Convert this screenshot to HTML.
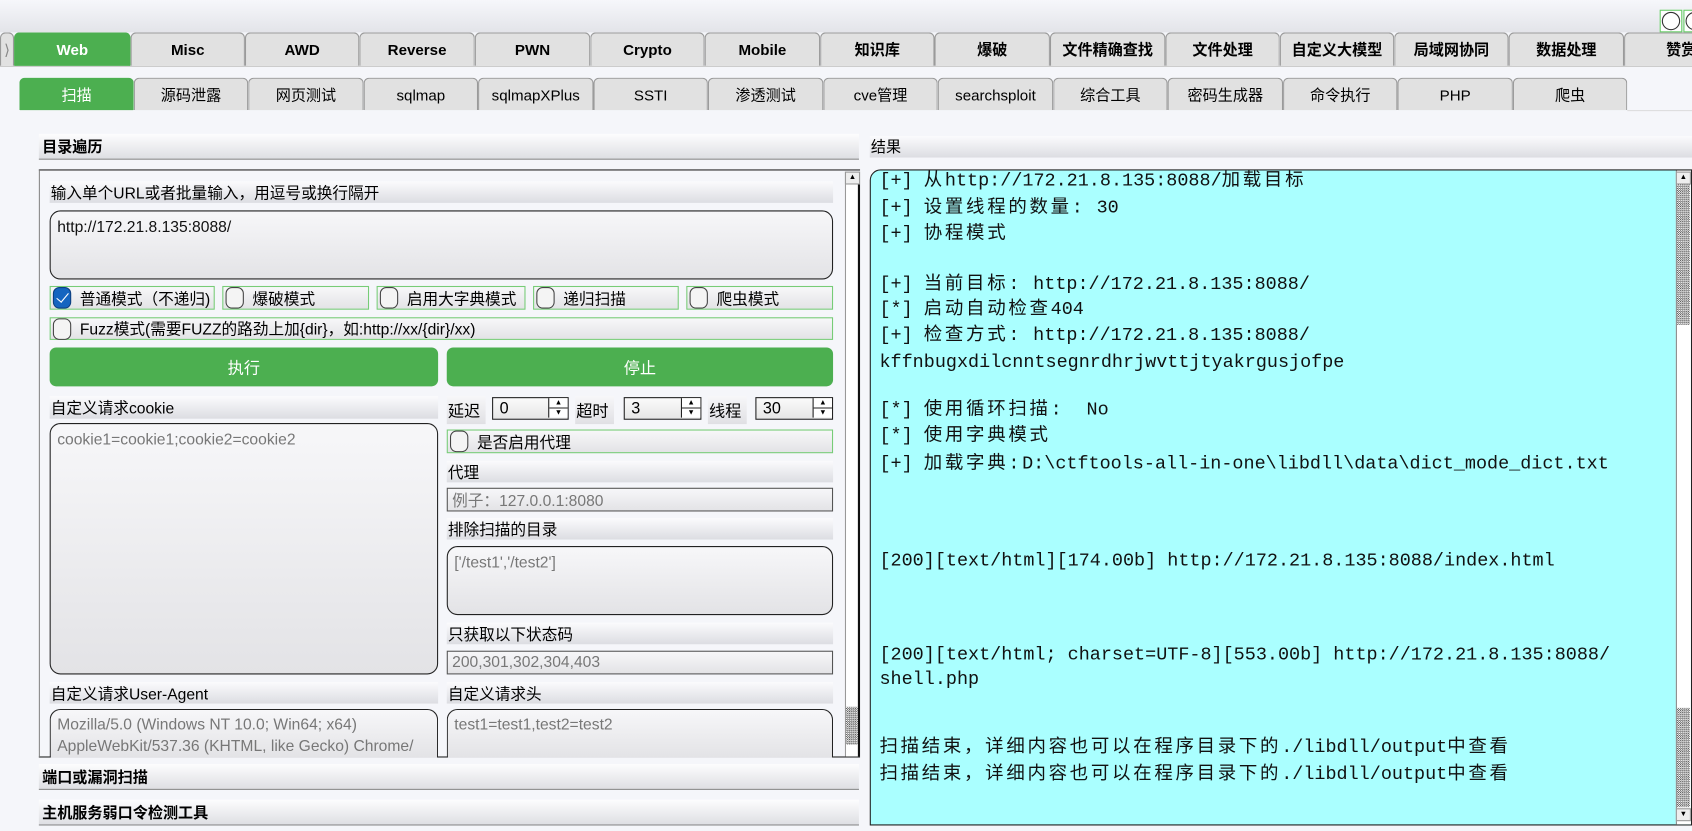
<!DOCTYPE html>
<html><head><meta charset="utf-8">
<style>
*{box-sizing:border-box;margin:0;padding:0}
html,body{width:1692px;height:830px;overflow:hidden;background:#f5f6fa}
#root{position:absolute;left:0;top:0;width:1568px;height:770px;transform:scale(1.0791);transform-origin:0 0;font-family:"Liberation Sans","Noto Sans CJK SC",sans-serif;color:#000}
.a{position:absolute}
.top{left:0;top:0;width:1568px;height:30px;background:linear-gradient(#f6f7fb,#e3e4e9)}
.t1{position:absolute;top:30px;height:31px;border:1px solid #9a9a9a;border-bottom:none;border-radius:5px 5px 0 0;background:#e1e1e1;font-weight:bold;font-size:14px;display:flex;align-items:center;justify-content:center}
.t2{position:absolute;top:72px;height:30px;border:1px solid #9a9a9a;border-bottom:none;border-radius:5px 5px 0 0;background:#e1e1e1;font-size:14px;display:flex;align-items:center;justify-content:center}
.g{background:#4caf50!important;color:#fff;border-color:#4caf50!important}
.bar{position:absolute;background:linear-gradient(#fbfbfd,#dcdde2);font-size:14.5px;display:flex;align-items:center;padding-left:1px;white-space:nowrap}
.hbar{position:absolute;background:linear-gradient(#fdfdfe,#dedfe3);font-size:14px;font-weight:bold;display:flex;align-items:center;padding-left:3px;border-bottom:1px solid #888}
.ta{position:absolute;border:1.5px solid #222;border-radius:10px;background:linear-gradient(#f7f7f9,#e3e3e6);font-size:14.5px;padding:4px 6px;color:#777;line-height:22px}
.inp{position:absolute;border:1.5px solid #555;background:linear-gradient(#f7f7f9,#e3e3e6);font-size:14.5px;color:#777;padding-left:4px;display:flex;align-items:center}
.cb{position:absolute;border:1px solid #7c7;background:linear-gradient(#f7f7f9,#e3e3e6);font-size:14.5px;display:flex;align-items:center;padding-left:2px;white-space:nowrap}
.cb i{display:inline-block;width:17px;height:20px;border:1.3px solid #444;border-radius:6px;margin-right:8px;background:#f4f4f4;flex:none}
.cb i.on{background:#1565c0;border-color:#0d3f80;position:relative}
.cb i.on:after{content:"";position:absolute;left:5px;top:2px;width:5px;height:10px;border:solid #fff;border-width:0 1.5px 1.5px 0;transform:rotate(40deg)}
.btn{position:absolute;background:#4caf50;border-radius:6px;color:#fff;font-size:15px;display:flex;align-items:center;justify-content:center}
.spin{position:absolute;height:21px;border:1.5px solid #222;background:linear-gradient(#fafafa,#e6e6e6);font-size:15px;padding-left:6px;display:flex;align-items:center}
.spin b{position:absolute;right:0;top:0;width:18px;height:18px;border-left:1px solid #222;background:linear-gradient(#fff 0,#fff 48%,#222 48%,#222 54%,#fff 54%);font-size:7px;text-align:center;line-height:9px;font-weight:normal}
.lbl{position:absolute;height:26px;background:linear-gradient(#f7f7f9,#e0e0e4);font-size:15px;display:flex;align-items:center;padding-left:1px}
.out{left:806px;top:157px;width:762px;height:608px;background:#aaffff;border:1.5px solid #222;border-radius:10px 0 0 0;overflow:hidden}
.ln{position:absolute;left:8px;font-family:"Liberation Mono","Noto Sans CJK SC",monospace;font-size:17.1px;white-space:pre;color:#111;line-height:22px}
.ln span{letter-spacing:2.5px}
.chk{background-image:repeating-conic-gradient(#555 0 25%,#fff 0 50%);background-size:2px 2px}
</style></head><body><div id="root">
<div class="a top"></div>
<div class="a" style="left:1538px;top:9px;width:21px;height:21px;border:1px solid #6c6;background:#fff"><div style="margin:1px;width:17px;height:17px;border:1px solid #333;border-radius:50%"></div></div>
<div class="a" style="left:1560px;top:9px;width:10px;height:21px;border:1px solid #6c6;background:#fff"><div style="margin:1px;width:17px;height:17px;border:1px solid #333;border-radius:50%"></div></div>
<div class="a" style="left:0;top:61px;width:1568px;height:1px;background:#c8c8c8"></div>
<div class="t1" style="left:0;width:13px;font-weight:normal;color:#888">⟩</div>
<div class="t1 g" style="left:13px;width:108px">Web</div>
<div class="t1" style="left:121px;width:106px">Misc</div>
<div class="t1" style="left:227px;width:106px">AWD</div>
<div class="t1" style="left:333px;width:107px">Reverse</div>
<div class="t1" style="left:440px;width:107px">PWN</div>
<div class="t1" style="left:547px;width:106px">Crypto</div>
<div class="t1" style="left:653px;width:107px">Mobile</div>
<div class="t1" style="left:760px;width:106px">知识库</div>
<div class="t1" style="left:866px;width:107px">爆破</div>
<div class="t1" style="left:973px;width:107px">文件精确查找</div>
<div class="t1" style="left:1080px;width:106px">文件处理</div>
<div class="t1" style="left:1186px;width:106px">自定义大模型</div>
<div class="t1" style="left:1292px;width:106px">局域网协同</div>
<div class="t1" style="left:1398px;width:107px">数据处理</div>
<div class="t1" style="left:1505px;width:106px">赞赏</div>

<div class="t2 g" style="left:18px;width:106px">扫描</div>
<div class="t2" style="left:124px;width:106px">源码泄露</div>
<div class="t2" style="left:230px;width:107px">网页测试</div>
<div class="t2" style="left:337px;width:106px">sqlmap</div>
<div class="t2" style="left:443px;width:107px">sqlmapXPlus</div>
<div class="t2" style="left:550px;width:106px">SSTI</div>
<div class="t2" style="left:656px;width:107px">渗透测试</div>
<div class="t2" style="left:763px;width:106px">cve管理</div>
<div class="t2" style="left:869px;width:107px">searchsploit</div>
<div class="t2" style="left:976px;width:106px">综合工具</div>
<div class="t2" style="left:1082px;width:107px">密码生成器</div>
<div class="t2" style="left:1189px;width:106px">命令执行</div>
<div class="t2" style="left:1295px;width:107px">PHP</div>
<div class="t2" style="left:1402px;width:106px">爬虫</div>
<div class="a" style="left:1508px;top:102px;width:60px;height:1px;background:#ddd"></div>

<div class="hbar" style="left:36px;top:124px;width:760px;height:24px">目录遍历</div>
<div class="a" style="left:36px;top:157px;width:761px;height:545px;border-top:1.5px solid #222;border-left:1px solid #888;border-bottom:1.5px solid #222"></div>
<div class="a" style="left:783px;top:159px;width:14px;height:542px;background:#fff;border-right:2px solid #111;border-left:1px solid #999"></div>
<div class="a" style="left:783px;top:159px;width:14px;height:12px;background:#eee;border:1px solid #999;font-size:7px;text-align:center;line-height:9px">▲</div>
<div class="a chk" style="left:784px;top:655px;width:11px;height:35px"></div>

<div class="bar" style="left:46px;top:168px;width:726px;height:20px">输入单个URL或者批量输入，用逗号或换行隔开</div>
<div class="ta" style="left:46px;top:195px;width:726px;height:64px;color:#111">http://172.21.8.135:8088/</div>
<div class="cb" style="left:46px;top:265px;width:153px;height:22px"><i class="on"></i>普通模式（不递归)</div>
<div class="cb" style="left:206px;top:265px;width:136px;height:22px"><i></i>爆破模式</div>
<div class="cb" style="left:349px;top:265px;width:138px;height:22px"><i></i>启用大字典模式</div>
<div class="cb" style="left:494px;top:265px;width:135px;height:22px"><i></i>递归扫描</div>
<div class="cb" style="left:636px;top:265px;width:136px;height:22px"><i></i>爬虫模式</div>
<div class="cb" style="left:46px;top:294px;width:726px;height:21px"><i></i>Fuzz模式(需要FUZZ的路劲上加{dir}，如:http://xx/{dir}/xx)</div>
<div class="btn" style="left:46px;top:322px;width:360px;height:36px">执行</div>
<div class="btn" style="left:414px;top:322px;width:358px;height:36px">停止</div>

<div class="bar" style="left:46px;top:367px;width:360px;height:21px">自定义请求cookie</div>
<div class="ta" style="left:46px;top:392px;width:360px;height:233px">cookie1=cookie1;cookie2=cookie2</div>
<div class="lbl" style="left:414px;top:367px;width:36px">延迟</div>
<div class="spin" style="left:456px;top:368px;width:71px">0<b>▲<br>▼</b></div>
<div class="lbl" style="left:533px;top:367px;width:36px">超时</div>
<div class="spin" style="left:578px;top:368px;width:72px">3<b>▲<br>▼</b></div>
<div class="lbl" style="left:656px;top:367px;width:36px">线程</div>
<div class="spin" style="left:700px;top:368px;width:72px">30<b>▲<br>▼</b></div>
<div class="cb" style="left:414px;top:398px;width:358px;height:22px"><i></i>是否启用代理</div>
<div class="bar" style="left:414px;top:427px;width:358px;height:20px">代理</div>
<div class="inp" style="left:414px;top:452px;width:358px;height:22px">例子：127.0.0.1:8080</div>
<div class="bar" style="left:414px;top:480px;width:358px;height:20px">排除扫描的目录</div>
<div class="ta" style="left:414px;top:506px;width:358px;height:64px">['/test1','/test2']</div>
<div class="bar" style="left:414px;top:577px;width:358px;height:20px">只获取以下状态码</div>
<div class="inp" style="left:414px;top:603px;width:358px;height:22px">200,301,302,304,403</div>
<div class="bar" style="left:46px;top:632px;width:360px;height:20px">自定义请求User-Agent</div>
<div class="bar" style="left:414px;top:632px;width:358px;height:20px">自定义请求头</div>
<div class="ta" style="left:46px;top:657px;width:360px;height:45px;border-bottom:none;border-radius:10px 10px 0 0;overflow:hidden;white-space:nowrap;line-height:20px">Mozilla/5.0 (Windows NT 10.0; Win64; x64)<br>AppleWebKit/537.36 (KHTML, like Gecko) Chrome/</div>
<div class="ta" style="left:414px;top:657px;width:358px;height:45px;border-bottom:none;border-radius:10px 10px 0 0;line-height:20px">test1=test1,test2=test2</div>

<div class="hbar" style="left:36px;top:708px;width:760px;height:24px">端口或漏洞扫描</div>
<div class="hbar" style="left:36px;top:741px;width:760px;height:24px">主机服务弱口令检测工具</div>

<div class="bar" style="left:806px;top:126px;width:762px;height:20px;font-size:14px">结果</div>
<div class="a out">
<div class="ln" style="top:0px">[+] <span>从</span>http://172.21.8.135:8088/<span>加载目标</span></div>
<div class="ln" style="top:25px">[+] <span>设置线程的数量:</span> 30</div>
<div class="ln" style="top:49px">[+] <span>协程模式</span></div>
<div class="ln" style="top:96px">[+] <span>当前目标:</span> http://172.21.8.135:8088/</div>
<div class="ln" style="top:119px">[*] <span>启动自动检查</span>404</div>
<div class="ln" style="top:143px">[+] <span>检查方式:</span> http://172.21.8.135:8088/</div>
<div class="ln" style="top:168px">kffnbugxdilcnntsegnrdhrjwvttjtyakrgusjofpe</div>
<div class="ln" style="top:212px">[*] <span>使用循环扫描:</span>  No</div>
<div class="ln" style="top:236px">[*] <span>使用字典模式</span></div>
<div class="ln" style="top:262px">[+] <span>加载字典:</span>D:\ctftools-all-in-one\libdll\data\dict_mode_dict.txt</div>
<div class="ln" style="top:352px">[200][text/html][174.00b] http://172.21.8.135:8088/index.html</div>
<div class="ln" style="top:439px">[200][text/html; charset=UTF-8][553.00b] http://172.21.8.135:8088/</div>
<div class="ln" style="top:462px">shell.php</div>
<div class="ln" style="top:525px"><span>扫描结束，详细内容也可以在程序目录下的</span>./libdll/output<span>中查看</span></div>
<div class="ln" style="top:550px"><span>扫描结束，详细内容也可以在程序目录下的</span>./libdll/output<span>中查看</span></div>
<div class="a" style="right:0;top:0;width:14px;height:606px;background:#fff;border-left:1px solid #888"></div>
<div class="a" style="right:0;top:1px;width:14px;height:12px;background:#eee;border:1px solid #999;font-size:7px;text-align:center;line-height:9px">▲</div>
<div class="a chk" style="right:1px;top:13px;width:12px;height:130px"></div>
<div class="a chk" style="right:1px;top:498px;width:12px;height:92px"></div>
<div class="a" style="right:0;top:591px;width:14px;height:12px;background:#eee;border:1px solid #999;font-size:7px;text-align:center;line-height:9px">▼</div>
</div>
</div></body></html>
